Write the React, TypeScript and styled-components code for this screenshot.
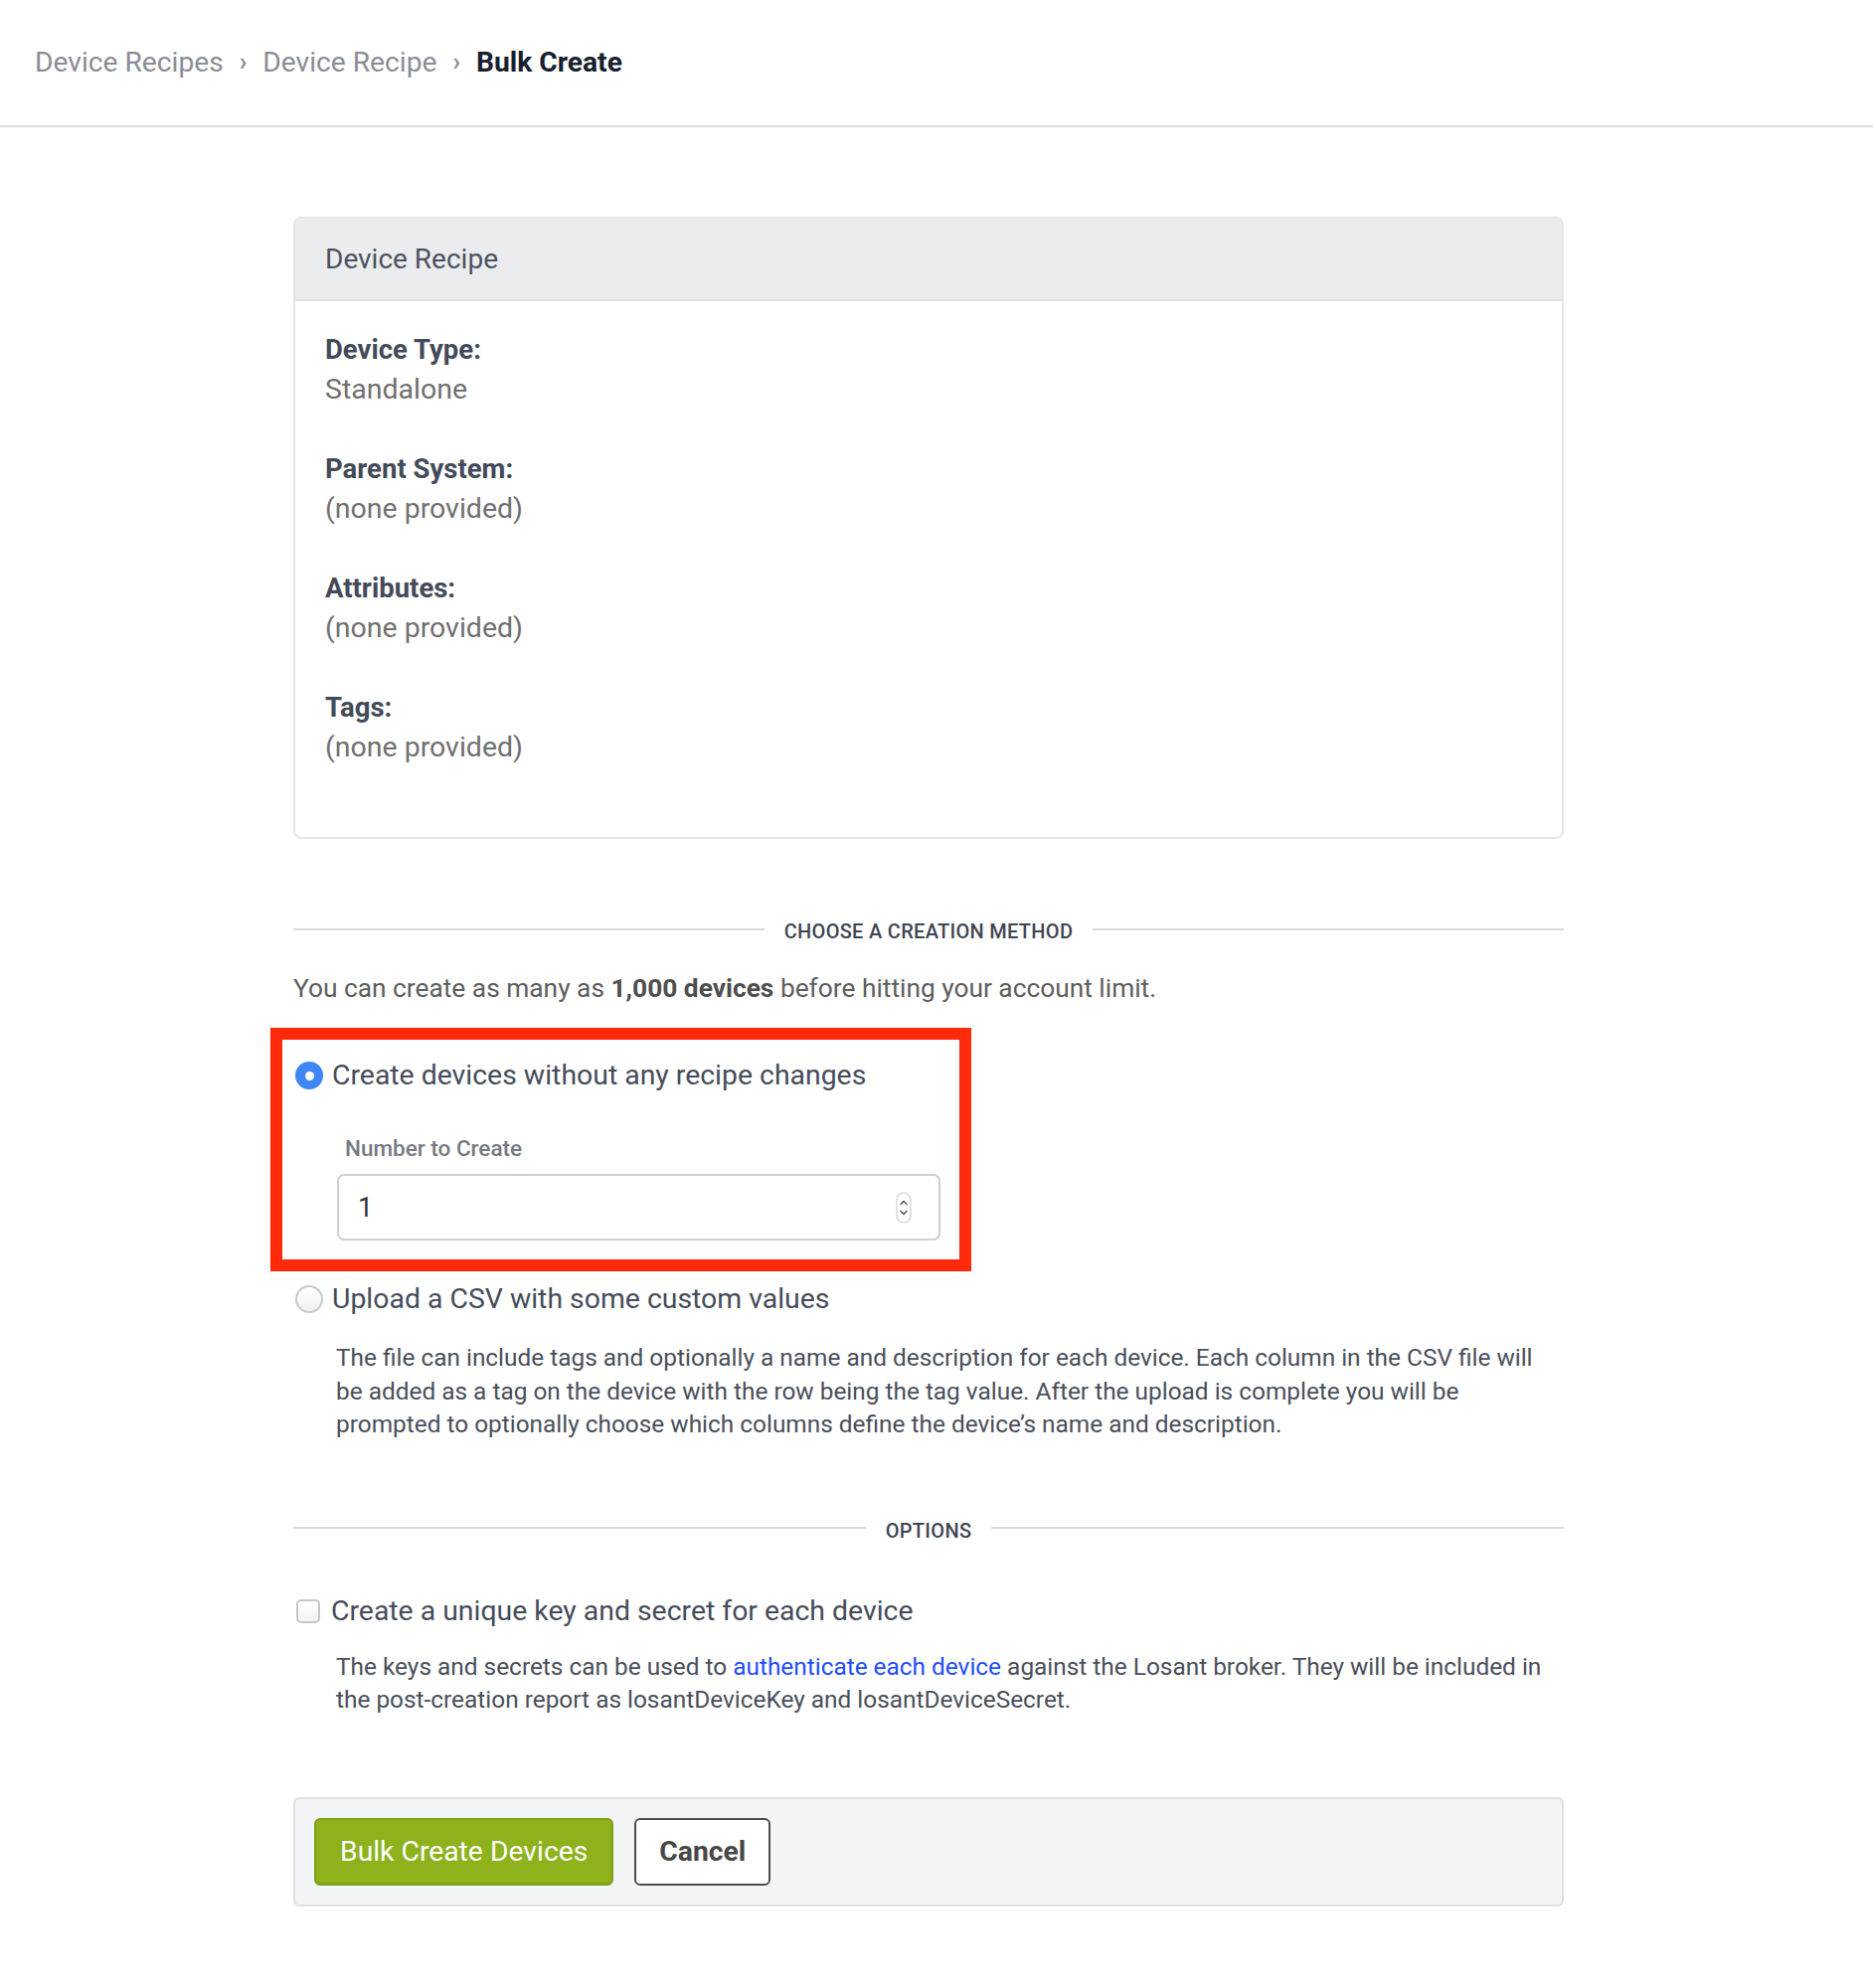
import React from "react";
import styled, { createGlobalStyle } from "styled-components";

const Global = createGlobalStyle`
  html, body { margin: 0; padding: 0; background: #ffffff; }
  body { font-family: Roboto, "Noto Sans", "Liberation Sans", sans-serif; color: #464c5a; }
  * { box-sizing: border-box; }
`;

const Page = styled.div`
  width: 1884px;
  min-height: 2000px;
  background: #fff;
`;

const TopBar = styled.header`
  height: 128px;
  border-bottom: 2px solid #dadbde;
  display: flex;
  align-items: center;
  padding: 0 0 0 35px;
`;

const Crumbs = styled.nav`
  display: flex;
  align-items: center;
  gap: 16px;
  font-size: 28.2px;
  line-height: 36px;
`;

const Crumb = styled.span<{ $current?: boolean }>`
  color: ${(p) => (p.$current ? "#16202f" : "#8a8d95")};
  font-weight: ${(p) => (p.$current ? 700 : 400)};
`;

const Sep = styled.span`
  color: #8a8d95;
  font-size: 25px;
  font-weight: 700;
`;

const Main = styled.main`
  width: 1278px;
  margin-left: 295px;
  padding-top: 90px;
  padding-bottom: 80px;
`;

const Card = styled.section`
  border: 2px solid #e4e5e7;
  border-radius: 8px;
  overflow: hidden;
`;

const CardHeader = styled.div`
  height: 83px;
  background: #ebecee;
  border-bottom: 2px solid #e1e2e4;
  display: flex;
  align-items: center;
  padding: 0 30px;
  font-size: 28px;
  color: #4b5263;
`;

const CardBody = styled.div`
  padding: 29px 30px 30px;
`;

const Field = styled.div`
  margin-bottom: 40px;
`;

const FieldLabel = styled.div`
  font-size: 27.5px;
  line-height: 40px;
  font-weight: 700;
  color: #434a5a;
`;

const FieldValue = styled.div`
  font-size: 28.5px;
  line-height: 40px;
  color: #707070;
`;

const Divider = styled.div<{ $top: number }>`
  display: flex;
  align-items: center;
  gap: 20px;
  margin-top: ${(p) => p.$top}px;
  &::before, &::after {
    content: "";
    flex: 1;
    height: 2px;
    margin-bottom: 5px;
    background: #d8d9db;
  }
`;

const DividerText = styled.span`
  font-size: 20px;
  line-height: 28px;
  font-weight: 500;
  letter-spacing: 0.3px;
  color: #3f4653;
  text-transform: uppercase;
`;

const Intro = styled.p`
  margin: 25px 0 0;
  font-size: 26.3px;
  line-height: 36px;
  color: #5e5e5e;
  b { color: #4e4e4e; font-weight: 700; }
`;

const Highlight = styled.div`
  margin: 22px 0 0 -23px;
  width: 705px;
  border: 12px solid #ff2a0c;
  padding: 16px 19px 19px 11px;
`;

const OptionRow = styled.label<{ $top?: number }>`
  display: flex;
  align-items: center;
  gap: 9px;
  padding-left: 2px;
  margin-top: ${(p) => p.$top ?? 0}px;
  font-size: 28.4px;
  line-height: 40px;
  color: #464c5a;
`;

const RadioDot = styled.span<{ $checked?: boolean }>`
  flex: none;
  width: 28px;
  height: 28px;
  border-radius: 50%;
  display: flex;
  align-items: center;
  justify-content: center;
  background: ${(p) => (p.$checked ? "#3d86f4" : "linear-gradient(#ffffff, #f1f1f1)")};
  border: ${(p) => (p.$checked ? "none" : "2px solid #c9c9c9")};
  &::after {
    content: "";
    width: 9px;
    height: 9px;
    border-radius: 50%;
    background: #fff;
    display: ${(p) => (p.$checked ? "block" : "none")};
  }
`;

const CheckBox = styled.span`
  flex: none;
  width: 24px;
  height: 24px;
  margin: 0 2px 0 1px;
  border-radius: 5px;
  border: 2px solid #c6c6c6;
  background: linear-gradient(#ffffff, #f3f3f3);
`;

const SubField = styled.div`
  margin: 39px 0 0 44px;
`;

const SubLabel = styled.div`
  padding-left: 8px;
  font-size: 22.5px;
  line-height: 28px;
  font-weight: 500;
  color: #767a82;
`;

const InputBox = styled.div`
  margin-top: 12px;
  height: 67px;
  border: 2px solid #cfcfd1;
  border-radius: 7px;
  display: flex;
  align-items: center;
  padding: 0 27px 0 19px;
  background: #fff;
`;

const NumberInput = styled.input`
  flex: 1;
  border: none;
  outline: none;
  background: transparent;
  font-family: inherit;
  font-size: 27px;
  color: #2f3440;
  padding: 0;
`;

const Help = styled.p<{ $top: number }>`
  margin: ${(p) => p.$top}px 0 0 43px;
  font-size: 24.4px;
  line-height: 33.5px;
  color: #4a4f5b;
  white-space: nowrap;
  a { color: #1f4dff; text-decoration: none; }
`;

const Footer = styled.div`
  margin-top: 81px;
  border: 2px solid #dfe0e2;
  border-radius: 6px;
  background: #f3f4f6;
  padding: 19px;
  display: flex;
  gap: 21px;
`;

const Button = styled.button<{ $primary?: boolean }>`
  height: 68px;
  padding: 0 ${(p) => (p.$primary ? 24 : 23)}px;
  border-radius: 6px;
  font-family: inherit;
  font-size: 28.3px;
  cursor: pointer;
  ${(p) =>
    p.$primary
      ? `
    background: #8db21c;
    color: #ffffff;
    border: 2px solid #7f9f17;
    border-bottom-width: 3px;
    font-weight: 400;
  `
      : `
    background: #ffffff;
    color: #474747;
    border: 2px solid #4c4c4c;
    font-weight: 700;
  `}
`;

function Spinner() {
  return (
    <svg width="16" height="32" viewBox="0 0 16 32" aria-hidden="true">
      <rect x="1" y="1" width="14" height="30" rx="7" fill="#fff" stroke="#cfcfcf" strokeWidth="1.2" />
      <path d="M5 12.5 L8 9.5 L11 12.5" fill="none" stroke="#555" strokeWidth="1.5" strokeLinecap="round" strokeLinejoin="round" />
      <path d="M5 19.5 L8 22.5 L11 19.5" fill="none" stroke="#555" strokeWidth="1.5" strokeLinecap="round" strokeLinejoin="round" />
    </svg>
  );
}

const fields: [string, string][] = [
  ["Device Type:", "Standalone"],
  ["Parent System:", "(none provided)"],
  ["Attributes:", "(none provided)"],
  ["Tags:", "(none provided)"],
];

export default function App() {
  return (
    <Page>
      <Global />
      <TopBar>
        <Crumbs>
          <Crumb>Device Recipes</Crumb>
          <Sep>›</Sep>
          <Crumb>Device Recipe</Crumb>
          <Sep>›</Sep>
          <Crumb $current>Bulk Create</Crumb>
        </Crumbs>
      </TopBar>
      <Main>
        <Card>
          <CardHeader>Device Recipe</CardHeader>
          <CardBody>
            {fields.map(([l, v]) => (
              <Field key={l}>
                <FieldLabel>{l}</FieldLabel>
                <FieldValue>{v}</FieldValue>
              </Field>
            ))}
          </CardBody>
        </Card>

        <Divider $top={79}>
          <DividerText>Choose a creation method</DividerText>
        </Divider>
        <Intro>
          You can create as many as <b>1,000 devices</b> before hitting your account limit.
        </Intro>

        <Highlight>
          <OptionRow>
            <RadioDot $checked />
            Create devices without any recipe changes
          </OptionRow>
          <SubField>
            <SubLabel>Number to Create</SubLabel>
            <InputBox>
              <NumberInput type="text" defaultValue="1" readOnly />
              <Spinner />
            </InputBox>
          </SubField>
        </Highlight>

        <OptionRow $top={8}>
          <RadioDot />
          Upload a CSV with some custom values
        </OptionRow>
        <Help $top={22}>
          The file can include tags and optionally a name and description for each device. Each column in the CSV file will
          <br />
          be added as a tag on the device with the row being the tag value. After the upload is complete you will be
          <br />
          prompted to optionally choose which columns define the device’s name and description.
        </Help>

        <Divider $top={76}>
          <DividerText>Options</DividerText>
        </Divider>

        <OptionRow $top={47}>
          <CheckBox />
          Create a unique key and secret for each device
        </OptionRow>
        <Help $top={19}>
          The keys and secrets can be used to <a href="#">authenticate each device</a> against the Losant broker. They will be included in
          <br />
          the post-creation report as losantDeviceKey and losantDeviceSecret.
        </Help>

        <Footer>
          <Button $primary>Bulk Create Devices</Button>
          <Button>Cancel</Button>
        </Footer>
      </Main>
    </Page>
  );
}
